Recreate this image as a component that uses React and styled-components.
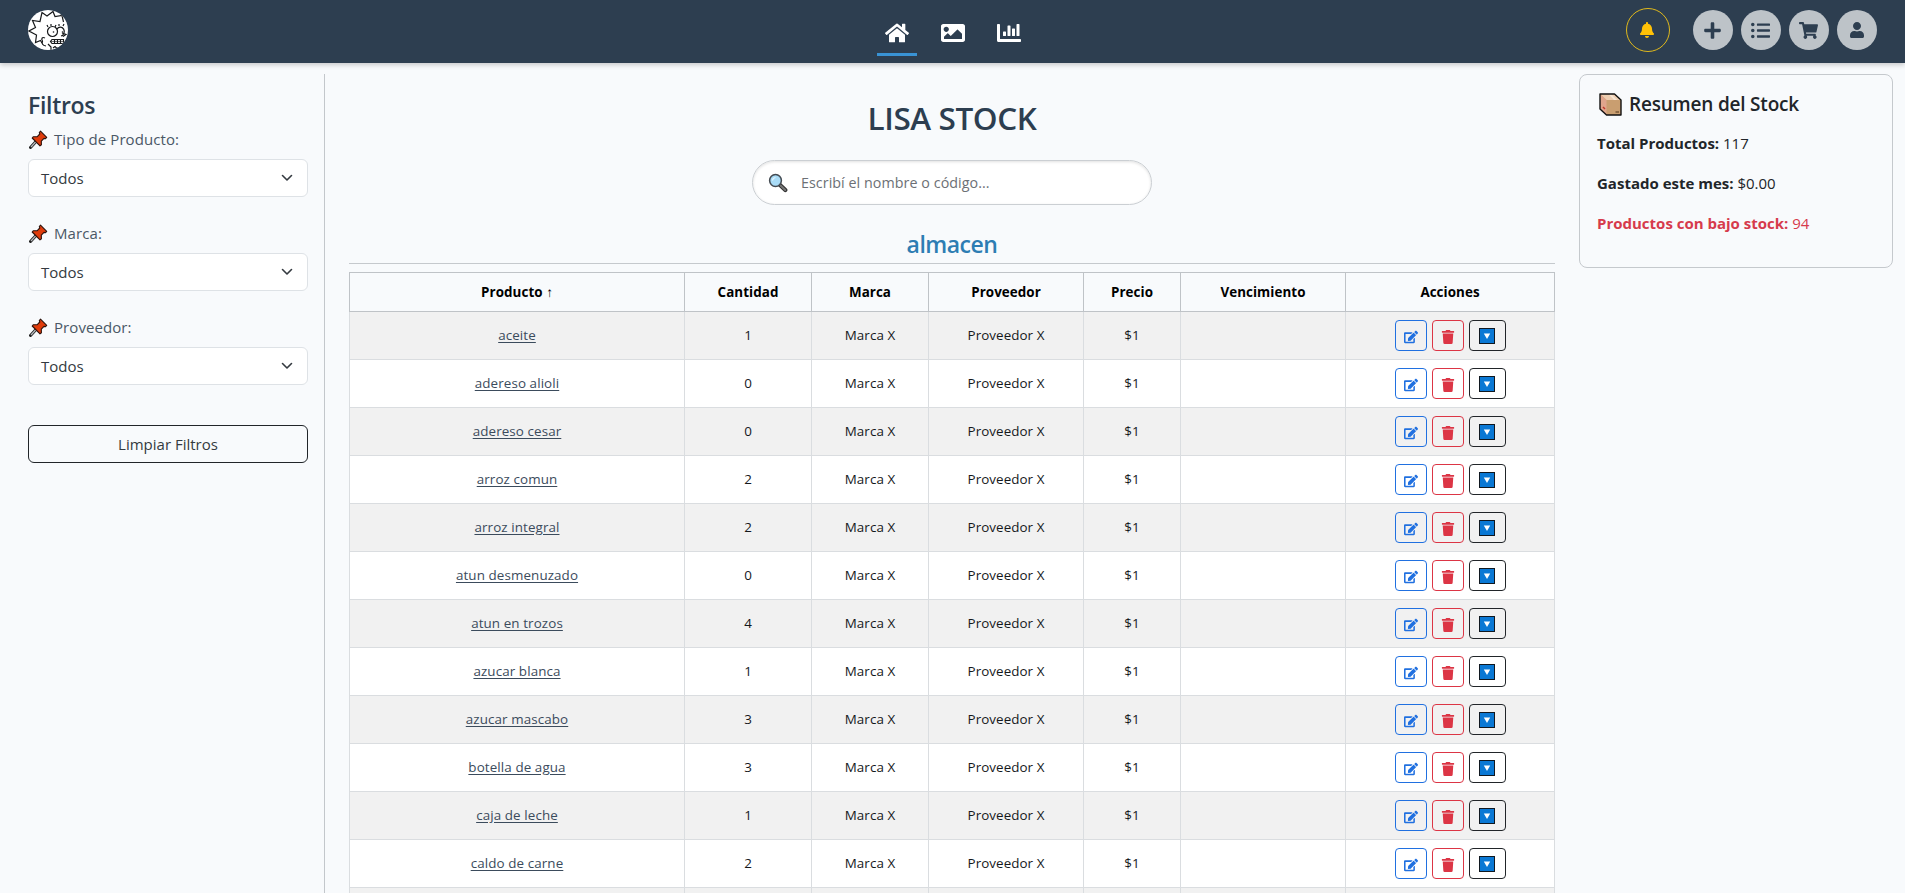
import React from "react";
import styled, { createGlobalStyle, css } from "styled-components";
import {
  FaHome, FaImage, FaChartBar, FaBell, FaPlus, FaListUl, FaShoppingCart, FaUser, FaEdit, FaTrash,
} from "react-icons/fa";

const GlobalStyle = createGlobalStyle`
  *, *::before, *::after { box-sizing: border-box; }
  body {
    margin: 0;
    height: 893px;
    overflow: hidden;
    background: #f8fafc;
    color: #212529;
    font-family: "Open Sans", "Noto Sans", sans-serif;
    font-size: 15px;
  }
  h1, h2, h3, p { margin: 0; }
  svg { display: block; flex: none; }
`;

const Header = styled.header`
  position: relative;
  height: 63px;
  padding: 0 28px;
  display: grid;
  grid-template-columns: 1fr auto 1fr;
  background: #2d3e50;
  box-shadow: 0 2px 5px rgba(0, 0, 0, 0.2);
`;
const Logo = styled.div`
  width: 40px;
  height: 40px;
  margin-top: 10px;
  border-radius: 50%;
  overflow: hidden;
  background: #fff;
`;
const Nav = styled.nav`
  display: flex;
  gap: 16px;
`;
const NavItem = styled.a`
  width: 40px;
  height: 56px;
  padding-top: 13px;
  display: flex;
  align-items: center;
  justify-content: center;
  color: #fff;
  font-size: 24px;
  border-bottom: 3px solid ${(p) => (p.$active ? "#3993d5" : "transparent")};
`;
const Tools = styled.div`
  display: flex;
  justify-content: flex-end;
  align-items: center;
  gap: 8px;
  height: 60px;
`;
const RoundButton = styled.button`
  width: 40px;
  height: 40px;
  padding: 0 1px 0 0;
  border: 0;
  border-radius: 50%;
  display: flex;
  align-items: center;
  justify-content: center;
  background: #bdc3c8;
  color: #2d3e50;
  font-size: ${(p) => p.$size || 19}px;
  ${(p) => p.$alert && css`
    width: 44px;
    height: 44px;
    margin-right: 15px;
    padding-right: 2px;
    background: transparent;
    border: 1px solid #e0b91c;
    color: #ffc107;
  `}
`;

const Page = styled.div`
  display: grid;
  grid-template-columns: 325px 1206px 314px;
  column-gap: 24px;
  padding-top: 11px;
  height: 830px;
`;
const Sidebar = styled.aside`
  padding: 15px 16px 0 28px;
  border-right: 1px solid #c3c7cb;
`;
const SidebarTitle = styled.h2`
  margin-bottom: 6px;
  font-size: 23px;
  line-height: 32px;
  font-weight: 600;
  letter-spacing: -0.3px;
  color: #2d3e50;
`;
const Field = styled.div`
  height: 94px;
`;
const Label = styled.label`
  display: flex;
  align-items: center;
  gap: 6px;
  height: 24px;
  margin-bottom: 8px;
  padding-left: 1px;
  line-height: 24px;
  letter-spacing: 0.08px;
  color: #4a5866;
`;
const Select = styled.div`
  display: flex;
  align-items: center;
  justify-content: space-between;
  height: 38px;
  padding: 0 14px 0 12px;
  border: 1px solid #dee2e6;
  border-radius: 6px;
  background: #fff;
  color: #343a40;
`;
const ClearButton = styled.button`
  width: 100%;
  height: 38px;
  margin-top: 16px;
  border: 1px solid #212529;
  border-radius: 6px;
  background: transparent;
  color: #343a40;
  font: inherit;
  letter-spacing: 0;
`;

const Main = styled.main`
  display: flex;
  flex-direction: column;
  align-items: center;
  overflow: hidden;
  & > * { flex: none; }
`;
const Title = styled.h1`
  margin-top: 24px;
  font-size: 31.5px;
  line-height: 40px;
  font-weight: 600;
  letter-spacing: -0.4px;
  color: #2d3e50;
`;
const Search = styled.div`
  display: flex;
  align-items: center;
  gap: 13px;
  width: 400px;
  height: 45px;
  margin-top: 22px;
  padding-left: 15px;
  border: 1px solid #cbcfd3;
  border-radius: 23px;
  background: #fff;
  box-shadow: inset 0 1px 3px rgba(0, 0, 0, 0.12);
  color: #6c7075;
  font-size: 14.3px;
  letter-spacing: 0.05px;
`;
const Category = styled.h2`
  width: 100%;
  height: 40px;
  margin: 19px 0 8px;
  padding-top: 5px;
  border-bottom: 1px solid #c5c9cd;
  text-align: center;
  font-size: 23px;
  line-height: 30px;
  font-weight: 600;
  letter-spacing: -0.5px;
  color: #2d7db3;
`;
const Table = styled.table`
  width: 1206px;
  table-layout: fixed;
  border-collapse: collapse;
  font-size: 13.4px;
  letter-spacing: 0.06px;
  color: #15181b;
`;
const HeadCell = styled.th`
  height: 39px;
  padding: 0;
  border: 1px solid #bfc3c7;
  font-weight: 700;
  color: #000;
`;
const Row = styled.tr`
  background: ${(p) => (p.$odd ? "#f1f1f1" : "#fff")};
`;
const Cell = styled.td`
  height: 48px;
  padding: 0 0 ${(p) => (p.$controls ? 0 : 2)}px;
  border: 1px solid #dadde0;
  text-align: center;
`;
const ProductLink = styled.a`
  color: #3b4b5c;
  letter-spacing: 0.1px;
  text-decoration: underline;
  text-underline-offset: 2px;
`;
const Actions = styled.div`
  display: flex;
  justify-content: center;
  gap: 5px;
`;
const tones = { edit: "#2070e0", remove: "#dc3545", more: "#212529" };
const ActionButton = styled.button`
  width: ${(p) => (p.$tone === "more" ? 37 : 32)}px;
  height: 31px;
  padding: ${(p) => (p.$tone === "more" ? 1 : 3)}px 0 0;
  display: flex;
  align-items: center;
  justify-content: center;
  border: 1px solid ${(p) => tones[p.$tone]};
  border-radius: 4px;
  background: transparent;
  color: ${(p) => tones[p.$tone]};
  font-size: 14px;
`;

const Summary = styled.section`
  height: 194px;
  padding: 16px 17px;
  border: 1px solid #c5c9cd;
  border-radius: 8px;
`;
const SummaryTitle = styled.h3`
  display: flex;
  align-items: center;
  gap: 7px;
  height: 26px;
  margin-bottom: 14px;
  padding-left: 2px;
  font-size: 19px;
  font-weight: 600;
  letter-spacing: -0.2px;
`;
const SummaryLine = styled.p`
  height: 24px;
  margin-bottom: 16px;
  line-height: 24px;
  color: ${(p) => (p.$danger ? "#d63a4c" : "#212529")};
`;

const LisaFace = () => (
  <svg width="40" height="40" viewBox="0 0 40 40" fill="none" stroke="#17191b" strokeWidth="1.200">
    <path d="M14 33 12.500 30.500 7.500 32.500 8.500 25 1 21 7.500 17.500 4.500 10.500 12 11.500 14 2.500 19 6 25 1.500 27 6.500 34 5.500 35.500 12" />
    <circle cx="24.500" cy="21.500" r="5" />
    <path d="M29 19a4 4.500 0 1 1 4 7M34 23l4 1.500-3 2M20 17l-1-2M23 16l0-2M27 17l1-2M31 16v-2M35 16l1-2" />
    <circle cx="25.500" cy="22" r=".8" fill="#17191b" stroke="none" />
    <circle cx="34.500" cy="22" r=".8" fill="#17191b" stroke="none" />
    <path d="M17 28c-3-1.500-4 1-2.500 3-1 2.500 0 4.500 3.500 5M20 34l3 3v3M35.500 29.500H24l-1.500 2 1.500 2h11.500zM26.500 29.500v4M29.500 29.500v4M32.500 29.500v4" />
    <path d="M23 31.500h13" strokeWidth=".6" />
    <path d="M25 38l2-1.500 2 2 3-1.500" />
  </svg>
);
const Pin = () => (
  <svg width="19" height="19" viewBox="0 0 19 19" strokeLinejoin="round">
    <path d="M7 11.500 1.500 17.500" stroke="#222" strokeWidth="3" strokeLinecap="round" />
    <path d="M7 11.500 2 17" stroke="#b8bcc0" strokeWidth="1.200" />
    <path d="M11.500 1.200 17.700 7.300 16.300 8.800 15 8.400 12.300 11.200 12.400 14.800 11 15.900 3.200 8 4.400 6.700 8 6.800 10.800 4 10.300 2.500z" fill="#e03c0c" stroke="#2b120c" strokeWidth="1.100" />
  </svg>
);
const Chevron = () => (
  <svg width="12" height="12" viewBox="0 0 12 12" fill="none" stroke="#343a40" strokeWidth="1.600" strokeLinecap="round" strokeLinejoin="round">
    <path d="M1.500 3.500 6 8l4.500-4.500" />
  </svg>
);
const Lens = () => (
  <svg width="20" height="20" viewBox="0 0 20 20">
    <path d="M11.500 11.500 17.300 17" stroke="#333" strokeWidth="4.200" strokeLinecap="round" />
    <path d="M12.500 12.500 17.200 17" stroke="#777" strokeWidth="2" strokeLinecap="round" />
    <circle cx="7.500" cy="7.500" r="5.900" fill="#a9dcf7" stroke="#444b52" strokeWidth="1.500" />
    <path d="M4.500 7.500a3.500 3.500 0 0 1 3-3" stroke="#e6f6ff" strokeWidth="1.200" fill="none" />
  </svg>
);
const Box = () => (
  <svg width="23" height="23" viewBox="0 0 23 23" strokeLinejoin="round">
    <path d="M1 1h14.500L22 7v15H7.500L1 16z" fill="#c99e70" />
    <path d="M1 1h14.500L22 7H7.500z" fill="#edcdb0" />
    <path d="M1 1l6.500 6v15L1 16z" fill="#dfa58c" />
    <path d="M9.500 1h2.500l6 6h-3z" fill="#f7e5d3" />
    <path d="M4 14l2 2" stroke="#c0392b" strokeWidth="1.500" />
    <path d="M16.500 19h3.500" stroke="#765435" strokeWidth="1.500" />
    <path d="M1 1h14.500L22 7v15H7.500L1 16z" fill="none" stroke="#111" strokeWidth="1.400" />
  </svg>
);
const DownSquare = () => (
  <svg width="16" height="16" viewBox="0 0 16 16">
    <rect x=".5" y=".5" width="15" height="15" fill="#0a78d4" stroke="#101820" />
    <path d="M4.800 5.500h6.400L8 11z" fill="#fff" />
  </svg>
);

const columns = [
  ["Producto", 335], ["Cantidad", 127], ["Marca", 117], ["Proveedor", 155],
  ["Precio", 97], ["Vencimiento", 165], ["Acciones", 209],
];
const products = [
  ["aceite", 1], ["adereso alioli", 0], ["adereso cesar", 0], ["arroz comun", 2],
  ["arroz integral", 2], ["atun desmenuzado", 0], ["atun en trozos", 4], ["azucar blanca", 1],
  ["azucar mascabo", 3], ["botella de agua", 3], ["caja de leche", 1], ["caldo de carne", 2], ["", ""],
];
const filters = ["Tipo de Producto:", "Marca:", "Proveedor:"];

export default function App() {
  return (
    <>
      <GlobalStyle />
      <Header>
        <Logo><LisaFace /></Logo>
        <Nav>
          <NavItem $active><FaHome /></NavItem>
          <NavItem><FaImage /></NavItem>
          <NavItem><FaChartBar /></NavItem>
        </Nav>
        <Tools>
          <RoundButton $alert $size={16}><FaBell /></RoundButton>
          <RoundButton><FaPlus /></RoundButton>
          <RoundButton><FaListUl /></RoundButton>
          <RoundButton><FaShoppingCart /></RoundButton>
          <RoundButton $size={16}><FaUser /></RoundButton>
        </Tools>
      </Header>
      <Page>
        <Sidebar>
          <SidebarTitle>Filtros</SidebarTitle>
          {filters.map((name) => (
            <Field key={name}>
              <Label><Pin />{name}</Label>
              <Select>Todos<Chevron /></Select>
            </Field>
          ))}
          <ClearButton>Limpiar Filtros</ClearButton>
        </Sidebar>
        <Main>
          <Title>LISA STOCK</Title>
          <Search><Lens /><span>Escribí el nombre o código...</span></Search>
          <Category>almacen</Category>
          <Table>
            <colgroup>
              {columns.map(([name, width]) => <col key={name} width={width} />)}
            </colgroup>
            <thead>
              <tr>
                {columns.map(([name], i) => <HeadCell key={name}>{name}{i === 0 && " ↑"}</HeadCell>)}
              </tr>
            </thead>
            <tbody>
              {products.map(([name, amount], i) => (
                <Row key={i} $odd={i % 2 === 0}>
                  <Cell><ProductLink>{name}</ProductLink></Cell>
                  <Cell>{amount}</Cell>
                  <Cell>{name && "Marca X"}</Cell>
                  <Cell>{name && "Proveedor X"}</Cell>
                  <Cell>{name && "$1"}</Cell>
                  <Cell />
                  <Cell $controls>
                    {name && (
                      <Actions>
                        <ActionButton $tone="edit"><FaEdit /></ActionButton>
                        <ActionButton $tone="remove"><FaTrash /></ActionButton>
                        <ActionButton $tone="more"><DownSquare /></ActionButton>
                      </Actions>
                    )}
                  </Cell>
                </Row>
              ))}
            </tbody>
          </Table>
        </Main>
        <Summary>
          <SummaryTitle><Box />Resumen del Stock</SummaryTitle>
          <SummaryLine><b>Total Productos:</b> 117</SummaryLine>
          <SummaryLine><b>Gastado este mes:</b> $0.00</SummaryLine>
          <SummaryLine $danger><b>Productos con bajo stock:</b> 94</SummaryLine>
        </Summary>
      </Page>
    </>
  );
}
